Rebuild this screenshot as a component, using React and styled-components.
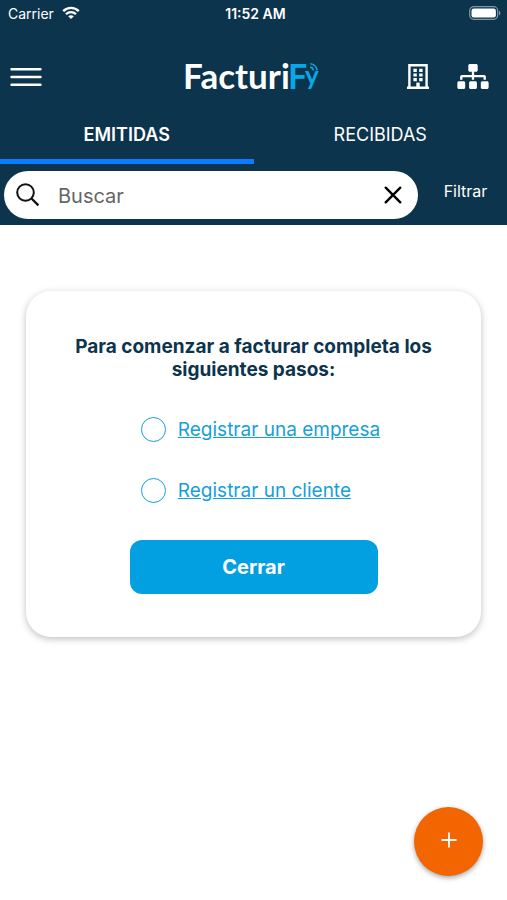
import React, { useState } from 'react'
import styled, { createGlobalStyle } from 'styled-components'
import { FaSitemap } from 'react-icons/fa'

const steps = [
  { id: 'empresa', label: 'Registrar una empresa' },
  { id: 'cliente', label: 'Registrar un cliente' }
]

const tabs = ['EMITIDAS', 'RECIBIDAS']

const Wifi = () => (
  <svg width="18" height="14" viewBox="0 0 18 14" fill="none" stroke="#fff" aria-hidden="true">
    <path d="M1.2 5.2 C5.6 .8 12.4 .8 16.8 5.2" strokeWidth="2.4" />
    <path d="M4 8.2 C6.9 5.4 11.1 5.4 14 8.2" strokeWidth="2.3" />
    <path d="M9 13 L6.2 10.3 C7.8 8.8 10.2 8.8 11.8 10.3 Z" fill="#fff" stroke="none" />
  </svg>
)

const Battery = () => (
  <svg width="32" height="14" viewBox="0 0 32 14" aria-hidden="true">
    <rect x=".7" y=".7" width="28" height="12.6" rx="4" fill="none" stroke="#8096a5" strokeWidth="1.2" />
    <rect x="2.5" y="2.5" width="24.4" height="9" rx="2.3" fill="#fff" />
    <path d="M30 4.7 C31.8 5.4 31.8 8.6 30 9.3 Z" fill="#8096a5" />
  </svg>
)

const Building = () => (
  <svg width="22" height="25" viewBox="0 0 22 25" fill="none" stroke="#fff" strokeWidth="2.4" aria-hidden="true">
    <path d="M2.4 24 V1.3 H19.6 V24 M0 23.8 H22" />
    <path d="M6.4 6.4 h3.4 M12.2 6.4 h3.4 M6.4 11 h3.4 M12.2 11 h3.4 M6.4 15.6 h3.4 M12.2 15.6 h3.4" strokeWidth="3.2" />
    <path d="M11 18.6 V23.8" strokeWidth="3.4" />
  </svg>
)

const Logo = () => (
  <svg width="134" height="48" viewBox="0 0 134 48" role="img" aria-label="Facturify">
    <g fontFamily="Lato, sans-serif" fontWeight="700">
      <text x="0" y="36" fontSize="35" fill="#fff">Facturi</text>
      <text x="105" y="36" fontSize="34" fill="#05a8e8">F</text>
      <text x="122" y="32" fontSize="26" fill="#05a8e8">y</text>
    </g>
    <g fill="none" stroke="#05a8e8" strokeWidth="1.4">
      <path d="M127 14.2 a3.6 3.6 0 0 1 3.4 3.4" />
      <path d="M127.4 10.8 a7 7 0 0 1 6.6 6.6" />
    </g>
  </svg>
)

const App = () => {
  const [activeTab, setActiveTab] = useState(tabs[0])
  const [query, setQuery] = useState('')

  return (
    <Page>
      <GlobalStyle />
      <Header>
        <StatusBar>
          <Carrier>Carrier <Wifi /></Carrier>
          <Clock>11:52 AM</Clock>
          <Battery />
        </StatusBar>
        <NavBar>
          <IconButton aria-label="Menú">
            <svg width="32" height="20" viewBox="0 0 32 20" stroke="#fff" strokeWidth="2.4" strokeLinecap="round">
              <path d="M1.5 2.2 H30.5 M1.5 10 H30.5 M1.5 17.8 H30.5" />
            </svg>
          </IconButton>
          <Logo />
          <NavActions>
            <IconButton aria-label="Empresas"><Building /></IconButton>
            <IconButton aria-label="Sucursales"><BranchesIcon /></IconButton>
          </NavActions>
        </NavBar>
        <Tabs role="tablist">
          {tabs.map(tab => (
            <Tab
              key={tab}
              role="tab"
              aria-selected={tab === activeTab}
              $active={tab === activeTab}
              onClick={() => setActiveTab(tab)}
            >
              {tab}
            </Tab>
          ))}
        </Tabs>
        <SearchRow>
          <SearchBox>
            <svg width="24" height="24" viewBox="0 0 24 24" fill="none" stroke="#111" strokeWidth="2" aria-hidden="true">
              <circle cx="9.5" cy="9.5" r="8.3" />
              <path d="M15.5 15.5 L22.4 22.4" strokeWidth="2.3" />
            </svg>
            <SearchInput
              aria-label="Buscar"
              placeholder="Buscar"
              value={query}
              onChange={e => setQuery(e.target.value)}
            />
            <IconButton aria-label="Borrar" onClick={() => setQuery('')}>
              <svg width="18" height="18" viewBox="0 0 18 18" stroke="#000" strokeWidth="2.4" strokeLinecap="round">
                <path d="M1.7 1.7 L16.3 16.3 M16.3 1.7 L1.7 16.3" />
              </svg>
            </IconButton>
          </SearchBox>
          <FilterButton>Filtrar</FilterButton>
        </SearchRow>
      </Header>
      <Main>
        <Card>
          <CardTitle>Para comenzar a facturar completa los siguientes pasos:</CardTitle>
          <Steps>
            {steps.map(step => (
              <Step key={step.id}>
                <StepCheck type="checkbox" aria-labelledby={step.id} />
                <StepLink id={step.id} href={`#${step.id}`}>{step.label}</StepLink>
              </Step>
            ))}
          </Steps>
          <CloseButton>Cerrar</CloseButton>
        </Card>
      </Main>
      <AddButton aria-label="Agregar">
        <svg width="16" height="16" viewBox="0 0 16 16" stroke="#fff" strokeWidth="1.8" aria-hidden="true">
          <path d="M8 .5 V15.5 M.5 8 H15.5" />
        </svg>
      </AddButton>
    </Page>
  )
}

const GlobalStyle = createGlobalStyle`
  * {
    box-sizing: border-box;
  }
  body {
    background: #fff;
    font-family: Inter, "Liberation Sans", sans-serif;
    margin: 0;
  }
  button,
  input {
    font-family: inherit;
  }
  svg {
    display: block;
    overflow: visible;
  }
`

const Button = styled.button`
  background: none;
  border: 0;
  color: #fff;
  cursor: pointer;
  padding: 0;
`

const Page = styled.div`
  display: flex;
  flex-direction: column;
  min-height: 100vh;
`

const Header = styled.header`
  background: #0c344d;
  color: #fff;
`

const StatusBar = styled.div`
  align-items: center;
  display: grid;
  font-size: 14px;
  grid-template-columns: 1fr auto 1fr;
  height: 28px;
  padding: 0 6px 2px 8px;
  > :last-child {
    justify-self: end;
  }
`

const Carrier = styled.span`
  align-items: center;
  display: flex;
  gap: 8px;
`

const Clock = styled.span`
  font-weight: 600;
  padding-left: 2px;
`

const NavBar = styled.div`
  align-items: center;
  display: grid;
  grid-template-columns: 1fr auto 1fr;
  height: 80px;
  padding: 18px 18px 0 10px;
`

const NavActions = styled.div`
  display: flex;
  gap: 28px;
  justify-content: flex-end;
  padding-bottom: 2px;
`

const IconButton = styled(Button)`
  justify-self: start;
`

const BranchesIcon = styled(FaSitemap)`
  height: 25px;
  width: 32px;
`

const Tabs = styled.div`
  display: flex;
`

const Tab = styled(Button)`
  border-bottom: 5px solid ${({ $active }) => ($active ? '#0a7cff' : 'transparent')};
  flex: 1;
  font-size: 18px;
  font-weight: ${({ $active }) => ($active ? 600 : 400)};
  height: 56px;
  padding-top: 2px;
`

const SearchRow = styled.div`
  align-items: center;
  display: flex;
  padding: 7px 0 6px 4px;
`

const SearchBox = styled.div`
  align-items: center;
  background: #fff;
  border-radius: 24px;
  display: flex;
  flex: 1;
  gap: 18px;
  height: 48px;
  min-width: 0;
  padding: 0 16px 0 12px;
`

const SearchInput = styled.input`
  background: none;
  border: 0;
  color: #222;
  flex: 1;
  font-size: 20px;
  min-width: 0;
  outline: 0;
  padding: 2px 0 0;
  &::placeholder {
    color: #666;
  }
`

const FilterButton = styled(Button)`
  flex: none;
  font-size: 16px;
  min-width: 89px;
  padding: 0 0 8px 6px;
`

const Main = styled.main`
  padding: 66px 26px;
`

const Card = styled.section`
  align-items: center;
  background: #fff;
  border-radius: 25px;
  box-shadow: 0 2px 7px rgba(0, 0, 0, 0.25);
  display: flex;
  flex-direction: column;
  padding: 44px 40px 43px;
`

const CardTitle = styled.h1`
  color: #0c344d;
  font-size: 19px;
  font-weight: 700;
  line-height: 23px;
  margin: 0;
  text-align: center;
`

const Steps = styled.ul`
  display: flex;
  flex-direction: column;
  gap: 36px;
  list-style: none;
  margin: 36px 0 37px;
  padding: 0 0 0 14px;
`

const Step = styled.li`
  align-items: center;
  display: flex;
  gap: 12px;
`

const StepCheck = styled.input`
  appearance: none;
  border: 1px solid #169fdb;
  border-radius: 50%;
  height: 25px;
  margin: 0;
  width: 25px;
  &:checked {
    background: #169fdb;
  }
`

const StepLink = styled.a`
  color: #169fdb;
  font-size: 19px;
  line-height: 24px;
`

const CloseButton = styled(Button)`
  background: #029fe1;
  border-radius: 12px;
  font-size: 20px;
  font-weight: 700;
  height: 54px;
  max-width: 248px;
  width: 100%;
`

const AddButton = styled(Button)`
  align-items: center;
  background: #f26500;
  border-radius: 50%;
  bottom: 24px;
  box-shadow: 0 2px 5px rgba(0, 0, 0, 0.35);
  display: flex;
  height: 69px;
  justify-content: center;
  padding-bottom: 4px;
  position: fixed;
  right: 24px;
  width: 69px;
`

export default App
